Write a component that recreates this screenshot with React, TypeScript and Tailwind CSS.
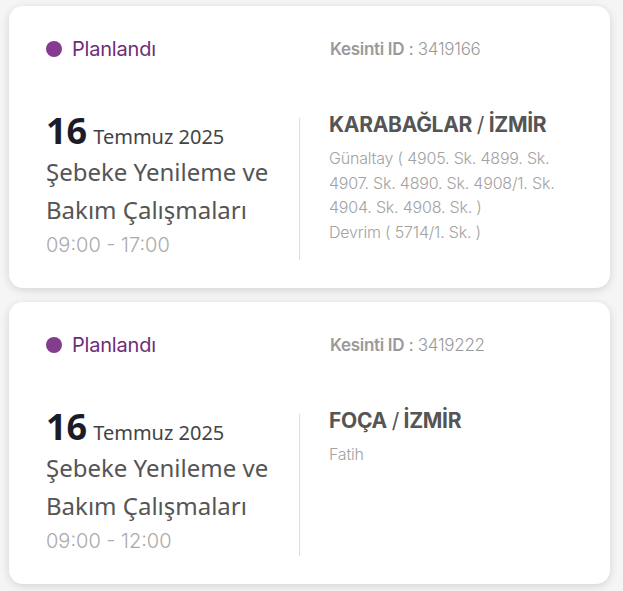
const outages = [
  {
    id: "3419166",
    day: "16",
    month: "Temmuz 2025",
    hours: "09:00 - 17:00",
    place: "KARABAĞLAR",
    city: "İZMİR",
    streets: [
      "Günaltay ( 4905. Sk. 4899. Sk.",
      "4907. Sk. 4890. Sk. 4908/1. Sk.",
      "4904. Sk. 4908. Sk. )",
      "Devrim ( 5714/1. Sk. )",
    ],
  },
  {
    id: "3419222",
    day: "16",
    month: "Temmuz 2025",
    hours: "09:00 - 12:00",
    place: "FOÇA",
    city: "İZMİR",
    streets: ["Fatih"],
  },
];

const geo = { fontFamily: "Inter, Lato, sans-serif" };
const hum = { fontFamily: "'Noto Sans', 'Open Sans', sans-serif" };

function OutageCard(props: { item: (typeof outages)[number] }) {
  const o = props.item;
  return (
    <div className="h-[282px] rounded-[14px] bg-white px-[37px] pt-[29px] shadow-[0_2px_9px_rgba(0,0,0,0.14)]">
      <div className="flex items-center" style={geo}>
        <div className="flex w-[284px] items-center gap-[10px]">
          <span className="h-[16px] w-[16px] rounded-full bg-[#843d8e]" />
          <span className="text-[20px] leading-[28px] tracking-[-0.2px] text-[#6f2d79]">Planlandı</span>
        </div>
        <div className="text-[17px] leading-[24px] tracking-[-0.3px] text-[#9a9a9a]">
          <span className="font-semibold">Kesinti ID</span> : <span className="font-light">{o.id}</span>
        </div>
      </div>
      <div className="mt-[55px] flex">
        <div className="w-[254px] border-r border-[#dddddd] pb-[1px]">
          <div className="-mt-[9px] flex items-baseline gap-[6px]" style={hum}>
            <span className="text-[36px] font-bold leading-[44px] text-[#1c1c28]">{o.day}</span>
            <span className="text-[20px] text-[#444444]">{o.month}</span>
          </div>
          <div className="text-[24px] leading-[38px] text-[#555555]" style={hum}>
            Şebeke Yenileme ve
            <br />
            Bakım Çalışmaları
          </div>
          <div className="mt-[2px] text-[20px] leading-[28px] text-[#aaaaaa] font-light" style={geo}>
            {o.hours}
          </div>
        </div>
        <div className="pl-[29px]" style={geo}>
          <div className="-mt-[8px] text-[21px] leading-[30px] font-bold tracking-[-0.3px] text-[#555555]">
            {o.place} <span className="font-normal">/</span> {o.city}
          </div>
          <div className="mt-[6px] text-[16px] leading-[24.5px] font-light tracking-[-0.2px] text-[#a2a2a2] whitespace-nowrap">
            {o.streets.map((s) => (
              <div key={s}>{s}</div>
            ))}
          </div>
        </div>
      </div>
    </div>
  );
}

export default function App() {
  return (
    <div className="min-h-[591px] bg-[#f5f5f5] px-[9px] pt-[6px] pb-[8px]">
      <div className="flex w-[601px] flex-col gap-[14px]">
        {outages.map((o) => (
          <OutageCard key={o.id} item={o} />
        ))}
      </div>
    </div>
  );
}
